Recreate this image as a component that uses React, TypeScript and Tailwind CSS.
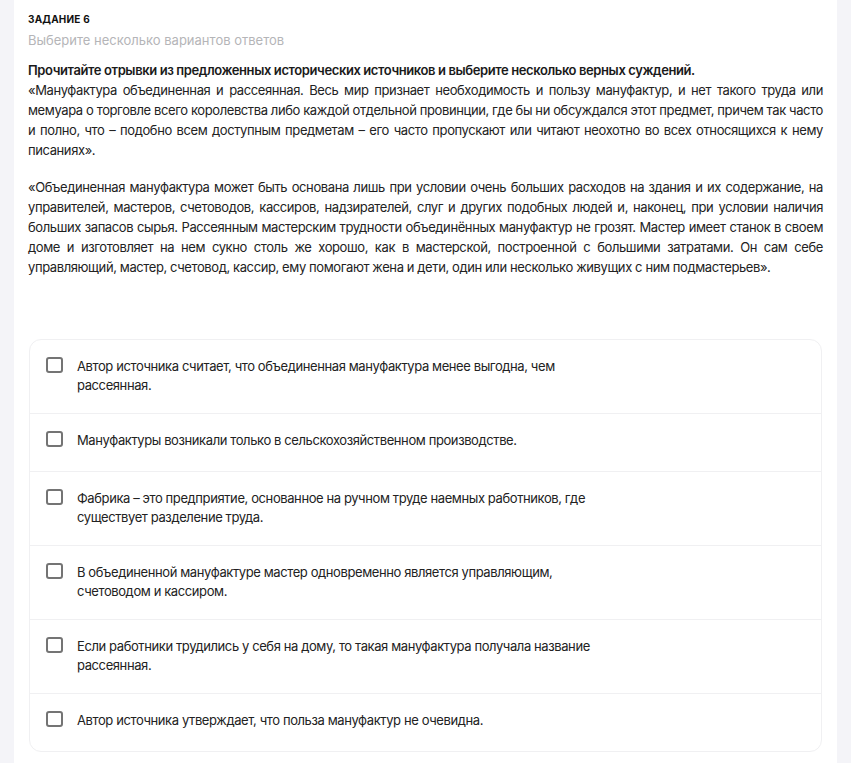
const options = [
  "Автор источника считает, что объединенная мануфактура менее выгодна, чем рассеянная.",
  "Мануфактуры возникали только в сельскохозяйственном производстве.",
  "Фабрика – это предприятие, основанное на ручном труде наемных работников, где существует разделение труда.",
  "В объединенной мануфактуре мастер одновременно является управляющим, счетоводом и кассиром.",
  "Если работники трудились у себя на дому, то такая мануфактура получала название рассеянная.",
  "Автор источника утверждает, что польза мануфактур не очевидна.",
]

function OptionRow({ text }: { text: string }) {
  return (
    <label className="flex items-start gap-[14px] pl-[16px] pr-4 pt-[17px] pb-[18px]">
      <span className="flex h-[22px] shrink-0 items-start">
        <span className="block h-[16px] w-[17px] rounded-[3px] border-2 border-[#747474] bg-white" />
      </span>
      <span className="max-w-[520px] text-[13px] leading-[19px] tracking-[-0.4px] text-[#222]">{text}</span>
    </label>
  )
}

export default function App() {
  return (
    <div className="flex min-h-[763px] w-full bg-[#f4f4f8] font-[Inter,sans-serif]">
      <main className="mx-[14px] flex-1 bg-white px-[14px] pt-[12px] pb-[10px]">
        <div className="text-[10px] font-bold uppercase leading-[14px] tracking-[0.02em] text-[#111]">Задание 6</div>
        <div className="mt-[4px] text-[13px] leading-[20px] text-[#b5b5b8]">Выберите несколько вариантов ответов</div>

        <div className="mt-[10px] text-[13px] leading-[20px] tracking-[-0.4px] text-[#222]">
          <p className="font-semibold text-[#1a1a1a]">
            Прочитайте отрывки из предложенных исторических источников и выберите несколько верных суждений.
          </p>
          <p className="text-justify">
            «Мануфактура объединенная и рассеянная. Весь мир признает необходимость и пользу мануфактур, и нет такого
            труда или мемуара о торговле всего королевства либо каждой отдельной провинции, где бы ни обсуждался этот
            предмет, причем так часто и полно, что – подобно всем доступным предметам – его часто пропускают или читают
            неохотно во всех относящихся к нему писаниях».
          </p>
          <p className="mt-[17px] text-justify">
            «Объединенная мануфактура может быть основана лишь при условии очень больших расходов на здания и их
            содержание, на управителей, мастеров, счетоводов, кассиров, надзирателей, слуг и других подобных людей и,
            наконец, при условии наличия больших запасов сырья. Рассеянным мастерским трудности объединённых мануфактур
            не грозят. Мастер имеет станок в своем доме и изготовляет на нем сукно столь же хорошо, как в мастерской,
            построенной с большими затратами. Он сам себе управляющий, мастер, счетовод, кассир, ему помогают жена и
            дети, один или несколько живущих с ним подмастерьев».
          </p>
        </div>

        <div className="mt-[62px] ml-px mr-[1px] divide-y divide-[#f0f0f2] rounded-[12px] border border-[#f0f0f2]">
          {options.map((o) => (
            <OptionRow key={o} text={o} />
          ))}
        </div>
      </main>
    </div>
  )
}
